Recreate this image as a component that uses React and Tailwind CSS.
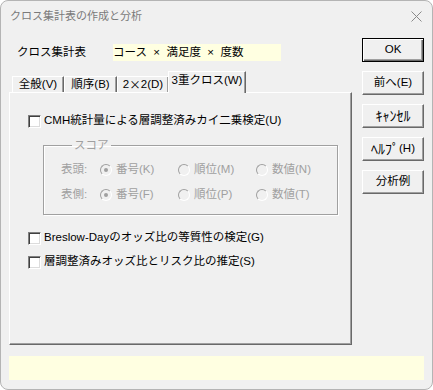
import React from 'react';

const font = { fontFamily: '"Liberation Sans", "Noto Sans CJK JP", sans-serif' };
const cjk = { fontFamily: '"Noto Sans CJK JP", sans-serif' };

function Check({ label }) {
  return (
    <div className="flex items-center h-[16px] pl-[18px]">
      <span className="w-[13px] h-[13px] bg-white border border-t-[#808080] border-l-[#808080] border-r-white border-b-white shadow-[inset_1px_1px_0_#404040,inset_-1px_-1px_0_#dcdcdc]" />
      <span className="ml-[3px] text-[11.5px] leading-none">{label}</span>
    </div>
  );
}

function Radio({ label, on }) {
  return (
    <div className="flex items-center w-[78px]">
      <span className="w-[12px] h-[12px] rounded-full border border-[#a0a0a0] border-r-white border-b-white bg-[#f0f0f0] flex items-center justify-center">
        {on && <span className="w-[4px] h-[4px] rounded-full bg-[#a0a0a0]" />}
      </span>
      <span className="ml-[4px] text-[11.5px] leading-none">{label}</span>
    </div>
  );
}

function Btn({ children, isDefault }) {
  return (
    <div
      className={
        'h-[24px] w-[62px] flex items-center justify-center text-[11.5px] leading-none bg-[#f0f0f0] ' +
        (isDefault
          ? 'border border-black shadow-[inset_1px_1px_0_white,inset_-1px_-1px_0_#696969,inset_-2px_-2px_0_#a0a0a0]'
          : 'border border-t-white border-l-white border-r-[#696969] border-b-[#696969] shadow-[inset_-1px_-1px_0_#a0a0a0]')
      }
    >
      {children}
    </div>
  );
}

export default function App() {
  const tabs = [
    { label: '全般(V)', w: 'w-[52px]' },
    { label: '順序(B)', w: 'w-[53px]' },
    { label: <>2<span style={cjk}>×</span>2(D)</>, w: 'w-[52px]' },
  ];

  return (
    <div className="w-[433px] h-[390px] bg-[#f0f0f0] text-black border border-[#b4b4b4] rounded-[8px] overflow-hidden flex flex-col" style={font}>
      {/* title bar */}
      <div className="h-[30px] flex items-center justify-between pl-[9px] pr-[10px] text-[11px] text-[#7a7a7a]">
        <span>クロス集計表の作成と分析</span>
        <svg width="11" height="11" viewBox="0 0 11 11">
          <path d="M0.5 0.5 L10.5 10.5 M10.5 0.5 L0.5 10.5" stroke="#8a8a8a" strokeWidth="1" />
        </svg>
      </div>

      <div className="flex pl-[8px]">
        {/* left column */}
        <div className="w-[343px] flex flex-col">
          <div className="mt-[13px] h-[17px] flex items-center">
            <span className="w-[104px] pl-[8px] text-[11.5px] leading-none">クロス集計表</span>
            <span className="w-[168px] h-[17px] bg-[#ffffe1] flex items-center text-[11.5px] leading-none whitespace-pre">コース  ×  満足度  ×  度数</span>
          </div>

          {/* tabs */}
          <div className="mt-[10px] h-[21px] flex items-end pl-[3px]">
            {tabs.map((t, i) => (
              <div key={i} className={t.w + ' h-[16px] flex items-center justify-center text-[11.5px] leading-none border-l border-t border-l-white border-t-white border-r border-r-[#696969] shadow-[inset_-1px_0_0_#a0a0a0]'}>
                {t.label}
              </div>
            ))}
            <div className="relative -ml-[1px] w-[78px] h-[22px] -mb-[1px] bg-[#f0f0f0] flex items-start justify-center pt-[3px] text-[11.5px] leading-none border-l border-t border-l-white border-t-white border-r border-r-[#696969] shadow-[inset_-1px_0_0_#a0a0a0]">
              3重クロス(W)
            </div>
          </div>

          {/* panel */}
          <div className="h-[253px] border border-t-white border-l-white border-r-[#696969] border-b-[#696969] shadow-[inset_-1px_-1px_0_#a0a0a0] flex flex-col pt-[20px]">
            <Check label="CMH統計量による層調整済みカイ二乗検定(U)" />

            <fieldset className="mt-[8px] ml-[33px] w-[295px] border border-[#a0a0a0] shadow-[inset_1px_1px_0_white,1px_1px_0_white] pl-[17px] pb-[11px] text-[#a0a0a0]">
              <legend className="ml-[11px] px-[2px] text-[11.5px] leading-[16px]">スコア</legend>
              <div className="flex flex-col gap-[9px] pt-[9px]">
                <div className="flex items-center h-[16px]">
                  <span className="w-[39px] text-[11.5px] leading-none">表頭:</span>
                  <Radio label="番号(K)" on />
                  <Radio label="順位(M)" />
                  <Radio label="数値(N)" />
                </div>
                <div className="flex items-center h-[16px]">
                  <span className="w-[39px] text-[11.5px] leading-none">表側:</span>
                  <Radio label="番号(F)" on />
                  <Radio label="順位(P)" />
                  <Radio label="数値(T)" />
                </div>
              </div>
            </fieldset>

            <div className="mt-[15px] flex flex-col gap-[8px]">
              <Check label="Breslow-Dayのオッズ比の等質性の検定(G)" />
              <Check label="層調整済みオッズ比とリスク比の推定(S)" />
            </div>
          </div>
        </div>

        {/* buttons */}
        <div className="ml-[10px] mt-[7px] flex flex-col gap-[9px]">
          <Btn isDefault>OK</Btn>
          <Btn>前へ(E)</Btn>
          <Btn><span className="text-[14px]">ｷｬﾝｾﾙ</span></Btn>
          <Btn><span className="text-[14px]">ﾍﾙﾌﾟ</span>(H)</Btn>
          <Btn>分析例</Btn>
        </div>
      </div>

      {/* status bar */}
      <div className="mt-[11px] mx-[8px] h-[24px] bg-[#ffffe1]" />
    </div>
  );
}
